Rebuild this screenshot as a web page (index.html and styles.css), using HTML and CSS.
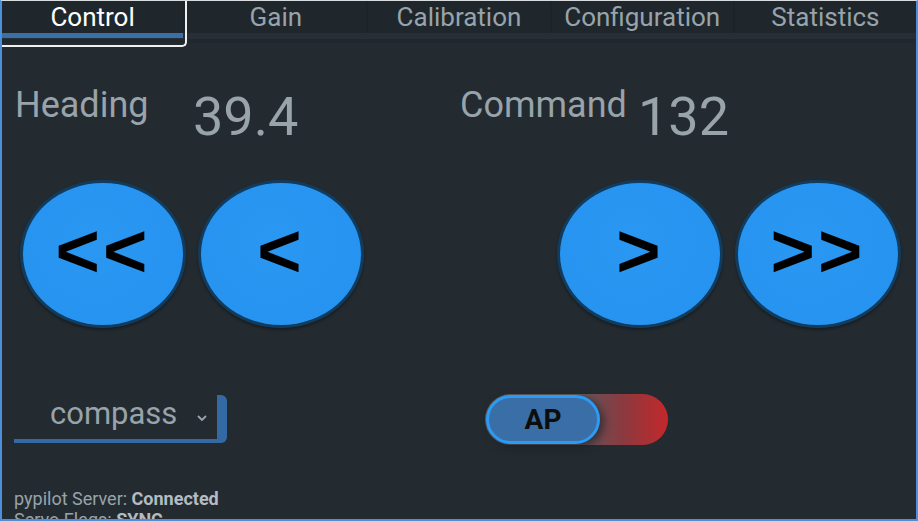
FILE: index.html
```html
<!DOCTYPE html>
<html>
<head>
<meta charset="utf-8">
<link rel="stylesheet" href="styles.css">
</head>
<body>
<div class="app">
  <nav class="tabs">
    <div class="tab active">Control</div>
    <div class="tab">Gain</div>
    <div class="tab">Calibration</div>
    <div class="tab">Configuration</div>
    <div class="tab last">Statistics</div>
  </nav>
  <div class="band"></div>
  <section class="readouts">
    <div class="pair">
      <span class="label">Heading</span>
      <span class="value">39.4</span>
    </div>
    <div class="pair">
      <span class="label">Command</span>
      <span class="value">132</span>
    </div>
  </section>
  <section class="buttons">
    <div class="group">
      <button class="round">&lt;&lt;</button>
      <button class="round">&lt;</button>
    </div>
    <div class="group">
      <button class="round">&gt;</button>
      <button class="round">&gt;&gt;</button>
    </div>
  </section>
  <section class="controls">
    <div class="select">
      <span class="select-text">compass</span>
      <svg class="chev" width="12" height="8" viewBox="0 0 12 8"><path d="M2 2 L6 6 L10 2" fill="none" stroke="#9aa5ac" stroke-width="1.8"/></svg>
    </div>
    <div class="toggle">
      <div class="knob">AP</div>
    </div>
  </section>
  <section class="status">
    <div>pypilot Server: <b>Connected</b></div>
    <div>Servo Flags: <b>SYNC</b></div>
  </section>
</div>
</body>
</html>
```

FILE: styles.css
```css
html, body {
  margin: 0;
  padding: 0;
  background: #232b31;
}
.app {
  width: 918px;
  height: 521px;
  box-sizing: border-box;
  border-top: 1px solid #d8dcdf;
  border-left: 2px solid #4d8fdb;
  border-right: 2px solid #4d8fdb;
  border-bottom: 2px solid #4d8fdb;
  background: #232b31;
  overflow: hidden;
  font-family: Roboto, "Noto Sans", sans-serif;
  color: #98a3aa;
}
.tabs {
  display: flex;
  height: 32px;
  background: #1f272d;
}
.tab {
  flex: 1;
  text-align: center;
  font-size: 26px;
  line-height: 34px;
  margin-top: -1px;
  color: #98a3aa;
  border-right: 2px solid #1c2429;
  position: relative;
}
.tab.last { border-right: none; }
.tab.active {
  color: #ffffff;
}
.tab.active::before {
  content: "";
  position: absolute;
  left: 0;
  right: 0;
  top: 33px;
  height: 5px;
  background: #3a6fa8;
}
.tab.active::after {
  content: "";
  position: absolute;
  left: 0;
  right: -4px;
  top: 0;
  height: 45px;
  border-right: 2px solid #f0f0f0;
  border-bottom: 2px solid #f0f0f0;
  border-radius: 0 0 5px 0;
  z-index: 2;
}
.band {
  height: 10px;
  background: linear-gradient(#262f35 0 6px, #20282d 6px);
}
.readouts {
  display: grid;
  grid-template-columns: 445px 1fr;
  padding: 42px 0 0 13px;
  height: 95px;
}
.pair {
  display: flex;
  align-items: flex-start;
}
.label {
  min-width: 178px;
  font-size: 36px;
  line-height: 41px;
}
.value {
  font-size: 54px;
  line-height: 63px;
}
.buttons {
  display: flex;
  justify-content: space-between;
  padding: 0 15px 0 18px;
}
.group {
  display: flex;
  gap: 12px;
}
.round {
  width: 166px;
  height: 148px;
  border-radius: 50%;
  border: 3px solid #123c5e;
  background: radial-gradient(circle at 45% 40%, #2a97f2, #2592f0);
  box-shadow: 0 2px 3px rgba(0,0,0,0.35);
  color: #000;
  font-family: "Liberation Sans", Arial, sans-serif;
  font-weight: bold;
  font-size: 76px;
  line-height: 1;
  padding: 0 0 6px 0;
  letter-spacing: 3px;
}
.controls {
  display: flex;
  align-items: flex-start;
  padding: 66px 0 0 12px;
  height: 84px;
}
.select {
  width: 203px;
  height: 44px;
  border-right: 10px solid #336aa3;
  border-bottom: 4px solid #336aa3;
  border-radius: 0 6px 6px 0;
  display: flex;
  align-items: center;
  margin-top: 1px;
}
.select-text {
  font-size: 31px;
  margin-left: 36px;
  line-height: 40px;
  margin-top: -6px;
  color: #98a3aa;
}
.chev {
  margin-left: 19px;
  margin-top: 2px;
}
.toggle {
  margin-left: 258px;
  width: 183px;
  height: 51px;
  border-radius: 26px;
  background: linear-gradient(90deg, #5d5c63 0%, #5f5a61 50%, #8a3a3f 75%, #c3282b 100%);
  display: flex;
  align-items: center;
}
.knob {
  width: 108px;
  height: 43px;
  border: 3px solid #2b9bf4;
  border-radius: 25px;
  background: #3a6ea6;
  box-shadow: 4px 3px 8px rgba(20,25,30,0.6);
  color: #0d0d0d;
  font-weight: bold;
  font-size: 28px;
  line-height: 43px;
  text-align: center;
  margin-left: 1px;
}
.status {
  padding: 10px 0 0 12px;
  font-size: 18px;
  line-height: 21px;
  color: #98a3aa;
}
.status b {
  color: #b3bcc2;
  font-weight: bold;
}
```
